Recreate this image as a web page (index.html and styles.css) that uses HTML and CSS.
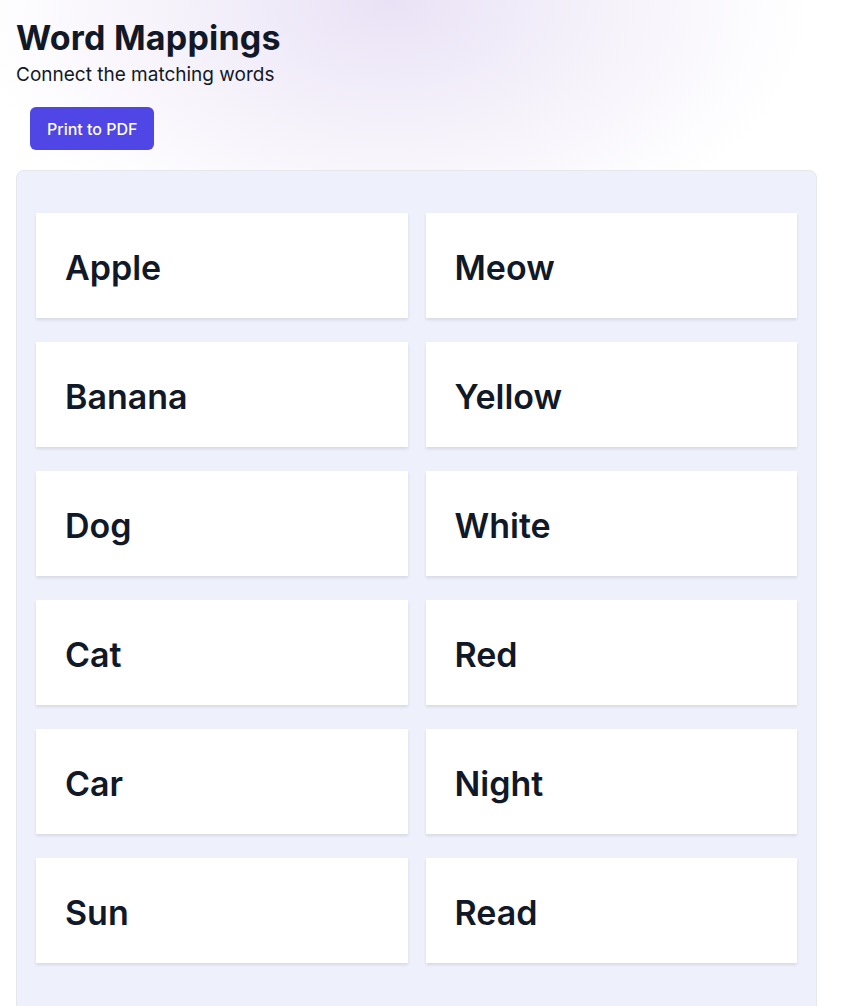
FILE: index.html
```html
<!DOCTYPE html>
<html lang="en">
<head>
    <meta charset="UTF-8">
    <meta name="viewport" content="width=device-width, initial-scale=1.0">
    <title>Word Mappings</title>
    <link rel="stylesheet" href="styles.css">
</head>
<body>
    <div class="page">
        <header class="header">
            <h1>Word Mappings</h1>
            <p class="subtitle">Connect the matching words</p>
        </header>

        <button class="print-button">Print to PDF</button>

        <div class="board">
            <div class="word-grid">
                <div class="word-card">Apple</div>
                <div class="word-card">Meow</div>
                <div class="word-card">Banana</div>
                <div class="word-card">Yellow</div>
                <div class="word-card">Dog</div>
                <div class="word-card">White</div>
                <div class="word-card">Cat</div>
                <div class="word-card">Red</div>
                <div class="word-card">Car</div>
                <div class="word-card">Night</div>
                <div class="word-card">Sun</div>
                <div class="word-card">Read</div>
            </div>
        </div>
    </div>
</body>
</html>
```

FILE: styles.css
```css
body {
    font-family: Inter, 'Noto Sans', sans-serif;
    margin: 0;
    padding: 0;
    color: #111827;
    background: radial-gradient(ellipse 420px 260px at 390px 0px, #e9e2f6 0%, #f4f0fa 45%, #ffffff 100%);
    background-color: #fff;
    min-height: 100vh;
}

.page {
    padding: 16px 33px 0 16px;
}

.header h1 {
    font-size: 34px;
    font-weight: 700;
    letter-spacing: 0.2px;
    margin: 0;
    line-height: 44px;
}

.subtitle {
    font-size: 19px;
    margin: 0;
    line-height: 29px;
}

.print-button {
    margin: 18px 0 20px 14px;
    padding: 0 17px;
    height: 43px;
    background-color: #4f46e5;
    color: white;
    border: none;
    border-radius: 6px;
    font-family: Inter, sans-serif;
    font-size: 16px;
    font-weight: 500;
}

.board {
    background-color: #eef0fc;
    border: 1px solid #e5e7eb;
    border-radius: 8px;
    padding: 42px 19px 60px 19px;
}

.word-grid {
    display: grid;
    grid-template-columns: 1fr 1fr;
    column-gap: 18px;
    row-gap: 24px;
}

.word-card {
    background: white;
    height: 105px;
    display: flex;
    align-items: center;
    padding: 4px 29px 0;
    box-sizing: border-box;
    font-size: 34px;
    font-weight: 600;
    box-shadow: 0 2px 3px rgba(0, 0, 0, 0.1);
}
```
